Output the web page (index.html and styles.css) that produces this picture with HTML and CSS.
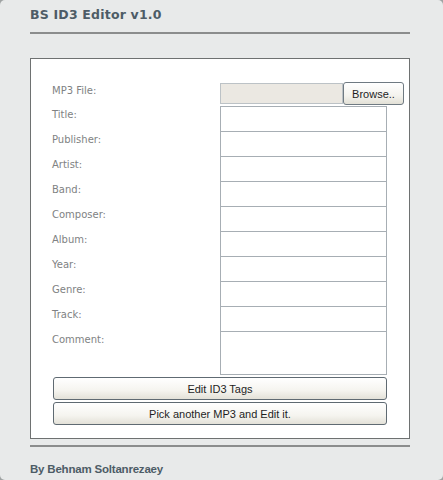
FILE: index.html
```html
<!doctype html>
<html lang="en">
<head>
    <meta charset="UTF-8">
    <meta name="viewport" content="width=device-width, initial-scale=1.0">
    <title>BS ID3 Editor</title>
    <link rel="stylesheet" href="styles.css">
</head>
<body>
<div class="page">
    <h1 class="title">BS ID3 Editor v1.0</h1>
    <div class="rule"></div>

    <div class="box">
        <div class="form">
            <label class="label">MP3 File:</label>
            <div class="file_row">
                <span class="file_field"></span>
                <button class="browse">Browse..</button>
            </div>

            <label class="label">Title:</label>
            <input class="field">
            <label class="label">Publisher:</label>
            <input class="field">
            <label class="label">Artist:</label>
            <input class="field">
            <label class="label">Band:</label>
            <input class="field">
            <label class="label">Composer:</label>
            <input class="field">
            <label class="label">Album:</label>
            <input class="field">
            <label class="label">Year:</label>
            <input class="field">
            <label class="label">Genre:</label>
            <input class="field">
            <label class="label">Track:</label>
            <input class="field">
            <label class="label">Comment:</label>
            <textarea class="field comment"></textarea>
        </div>

        <div class="actions">
            <button class="wide_button">Edit ID3 Tags</button>
            <button class="wide_button">Pick another MP3 and Edit it.</button>
        </div>
    </div>

    <div class="rule bottom"></div>
    <div class="footer">By Behnam Soltanrezaey</div>
</div>
</body>
</html>
```

FILE: styles.css
```css
html {
    background-color: #9fa3a3;
}

body {
    margin: 0;
    height: 480px;
    background-color: #e8eaea;
    border-radius: 5px;
    overflow: hidden;
}

.page {
    padding: 0 33px 0 30px;
}

.title {
    margin: 0;
    padding-top: 7px;
    font-family: "DejaVu Sans", sans-serif;
    font-size: 12.5px;
    line-height: 16px;
    font-weight: bold;
    letter-spacing: 0.2px;
    color: #4d5c66;
}

.rule {
    height: 2px;
    margin-top: 9px;
    background-color: #8b8d8d;
}

.box {
    margin-top: 24px;
    border: 1px solid #6e7171;
    background-color: #fff;
    padding: 23px 22px 13px 21px;
}

.form {
    display: grid;
    grid-template-columns: 168px 1fr;
}

.label {
    padding-top: 3px;
    font-family: "DejaVu Sans", sans-serif;
    font-size: 10px;
    line-height: 12px;
    color: #808283;
}

.file_row {
    display: flex;
    align-items: center;
    height: 23px;
    margin-bottom: 1px;
}

.file_field {
    width: 123px;
    height: 21px;
    box-sizing: border-box;
    border: 1px solid #bcc2c6;
    background-color: #ebe8e2;
}

.browse {
    width: 61px;
    height: 23px;
    padding: 0;
    border: 1px solid #6f7a82;
    border-radius: 3px;
    background: linear-gradient(#ffffff, #f4f3ee 60%, #e2e0d6);
    font-family: "Liberation Sans", Arial, sans-serif;
    font-size: 11px;
    color: #1e1e1e;
}

.field {
    width: 167px;
    height: 26px;
    margin: 0 0 -1px 0;
    box-sizing: border-box;
    border: 1px solid #a7aeb4;
    background-color: #fff;
    padding: 2px 4px;
    font-family: "Liberation Sans", Arial, sans-serif;
    font-size: 11px;
}

.comment {
    height: 44px;
    margin-bottom: 0;
    resize: none;
}

.actions {
    display: flex;
    flex-direction: column;
    gap: 2px;
    margin: 2px 0 0 1px;
    width: 334px;
}

.wide_button {
    height: 23px;
    padding: 0;
    border: 1px solid #5f6a72;
    border-radius: 3px;
    background: linear-gradient(#ffffff, #f5f4ef 60%, #e3e1d8);
    font-family: "Liberation Sans", Arial, sans-serif;
    font-size: 11px;
    color: #1e1e1e;
}

.rule.bottom {
    margin-top: 6px;
}

.footer {
    padding-top: 15px;
    font-family: "Liberation Sans", Arial, sans-serif;
    font-size: 11.5px;
    line-height: 14px;
    font-weight: bold;
    letter-spacing: -0.2px;
    color: #4d5c66;
}
```
